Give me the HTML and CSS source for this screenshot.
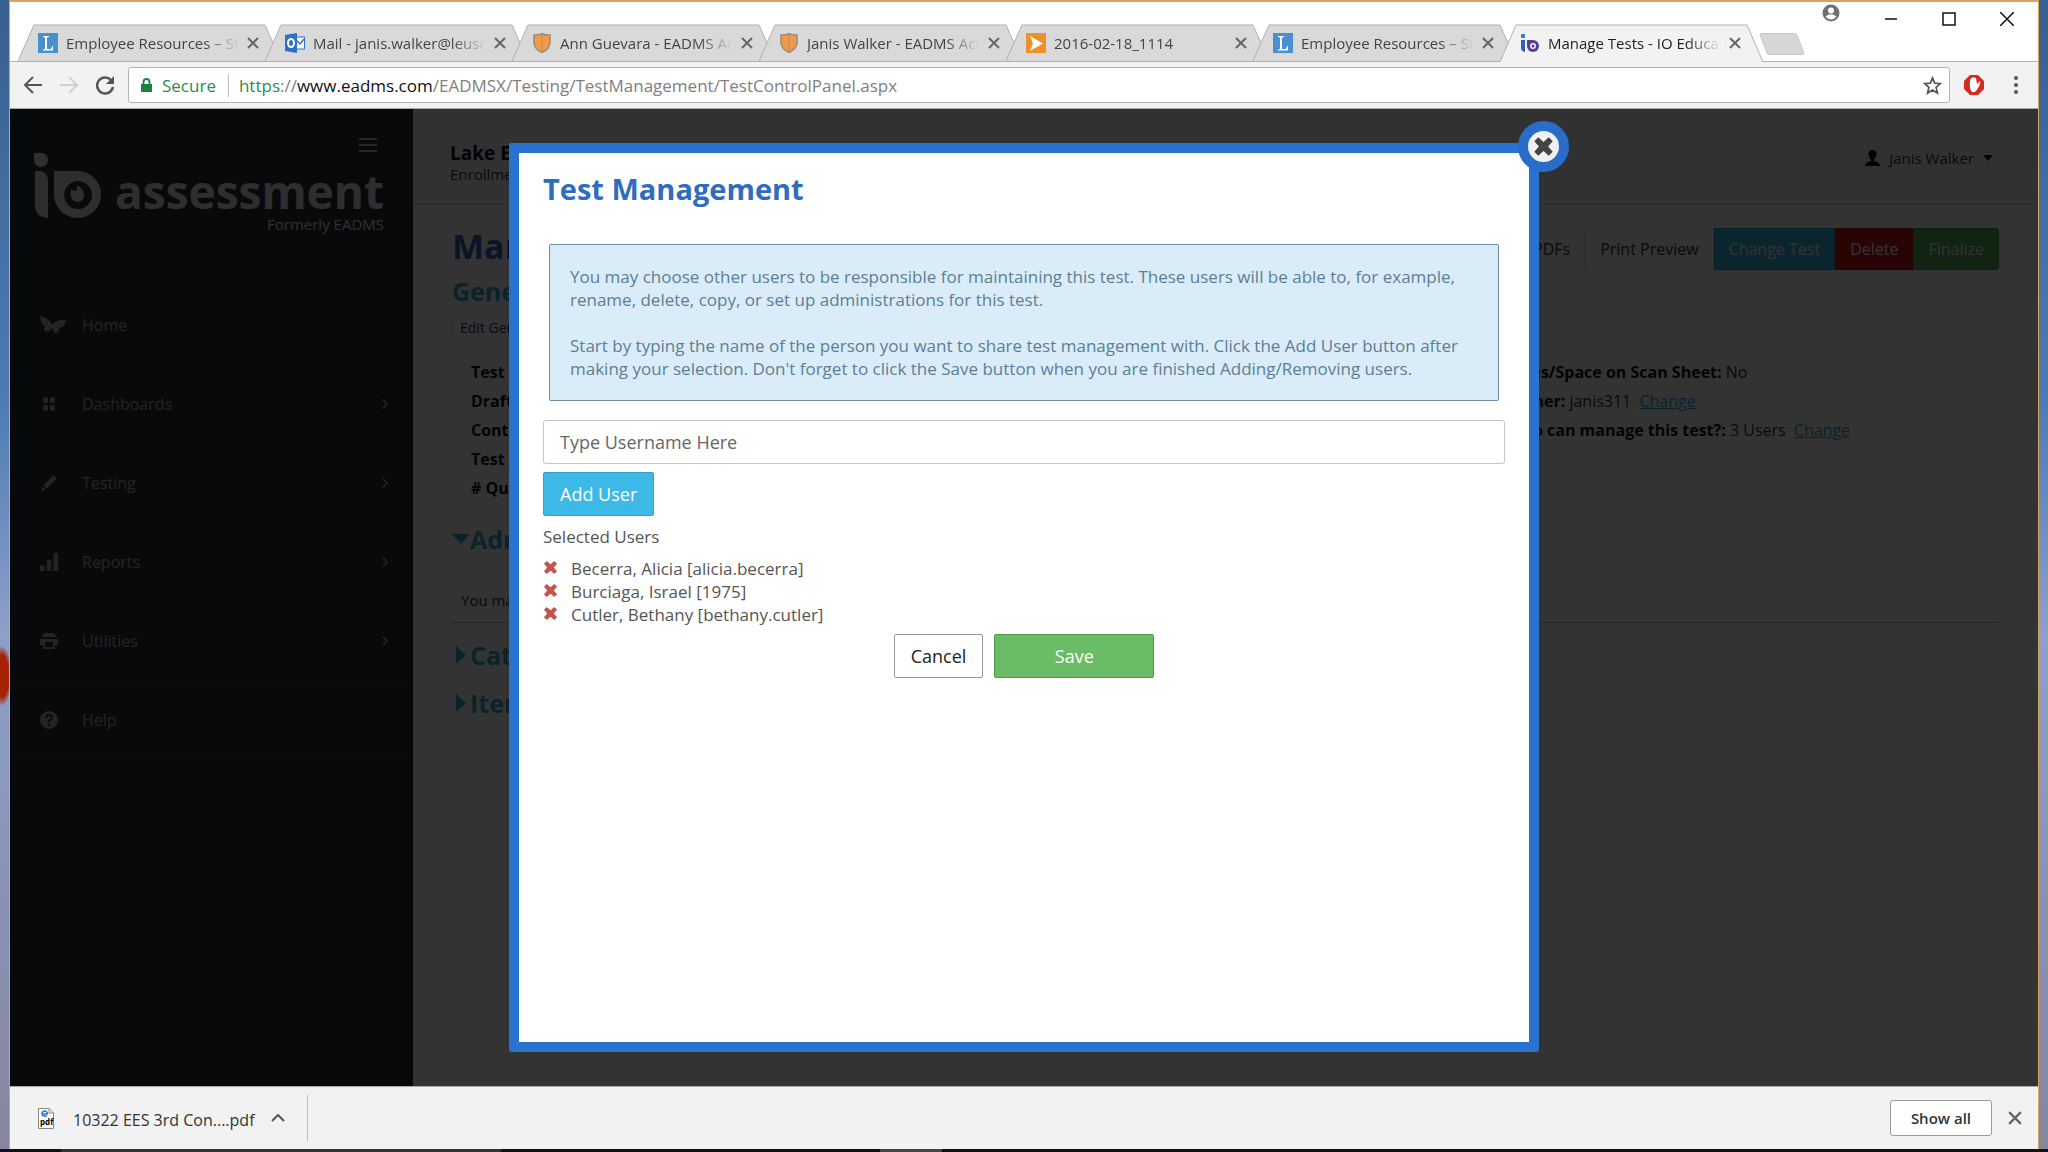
FILE: index.html
```html
<!DOCTYPE html>
<html lang="en">
<head>
    <meta charset="UTF-8">
    <meta name="viewport" content="width=device-width, initial-scale=1.0">
    <title>Manage Tests - IO Education</title>
    <link rel="stylesheet" href="styles.css">
</head>
<body>
    <svg class="defs" aria-hidden="true">
        <symbol id="tab-shape" viewBox="0 0 263 38" preserveAspectRatio="none">
            <path d="M0 38L16 1H247L263 38" vector-effect="non-scaling-stroke"/>
        </symbol>
        <symbol id="icon-close" viewBox="0 0 12 12">
            <path d="M1 1L11 11M11 1L1 11" fill="none" stroke="currentColor" stroke-width="2"/>
        </symbol>
        <symbol id="icon-l" viewBox="0 0 20 20">
            <rect width="20" height="20" fill="#4a8fd0"/>
            <path d="M5 3h6v1l-2 .6V16h4l1.200-3h.9L15 17.500H5v-1l2-.6V4.600L5 4z" fill="#fff"/>
        </symbol>
        <symbol id="icon-shield" viewBox="0 0 20 20">
            <path d="M2 2Q6 2.500 10 .8Q14 2.500 18 2V10Q17.500 16 10 19.500Q2.500 16 2 10Z" fill="#ef9a4c" stroke="#9a8a78" stroke-width="1.500"/>
            <path d="M10 2V18" stroke="#d9803a"/>
        </symbol>
        <symbol id="icon-x" viewBox="0 0 16 16">
            <path d="M1 4L4 1L8 4.500L12 1L15 4L11.500 8L15 12L12 15L8 11.500L4 15L1 12L4.500 8Z" fill="currentColor"/>
        </symbol>
        <symbol id="icon-chevron" viewBox="0 0 8 12">
            <path d="M2 1.500L6 6L2 10.500" fill="none" stroke="currentColor" stroke-width="1.500"/>
        </symbol>
    </svg>

    <div class="window">
        <div class="tab-strip">
            <div class="tabs">
                <div class="tab">
                    <svg class="tab-shape"><use href="#tab-shape"/></svg>
                    <svg class="favicon"><use href="#icon-l"/></svg>
                    <span class="tab-title">Employee Resources – Staff</span>
                    <button class="tab-close" aria-label="Close tab"><svg><use href="#icon-close"/></svg></button>
                </div>
                <div class="tab">
                    <svg class="tab-shape"><use href="#tab-shape"/></svg>
                    <svg class="favicon" viewBox="0 0 20 20">
                        <path d="M10 4h9.500v12H10z" fill="#fff" stroke="#2f6fc4"/>
                        <path d="M11 7l4 4 4-5" fill="none" stroke="#2f6fc4" stroke-width="1.500"/>
                        <path d="M0 2L12 0V20L0 18z" fill="#2f6fc4"/>
                        <ellipse cx="6" cy="10" rx="3" ry="4" fill="none" stroke="#fff" stroke-width="2"/>
                    </svg>
                    <span class="tab-title">Mail - janis.walker@leusd.org</span>
                    <button class="tab-close" aria-label="Close tab"><svg><use href="#icon-close"/></svg></button>
                </div>
                <div class="tab">
                    <svg class="tab-shape"><use href="#tab-shape"/></svg>
                    <svg class="favicon"><use href="#icon-shield"/></svg>
                    <span class="tab-title">Ann Guevara - EADMS Account</span>
                    <button class="tab-close" aria-label="Close tab"><svg><use href="#icon-close"/></svg></button>
                </div>
                <div class="tab">
                    <svg class="tab-shape"><use href="#tab-shape"/></svg>
                    <svg class="favicon"><use href="#icon-shield"/></svg>
                    <span class="tab-title">Janis Walker - EADMS Account</span>
                    <button class="tab-close" aria-label="Close tab"><svg><use href="#icon-close"/></svg></button>
                </div>
                <div class="tab">
                    <svg class="tab-shape"><use href="#tab-shape"/></svg>
                    <svg class="favicon" viewBox="0 0 20 20">
                        <rect width="20" height="20" fill="#ee9128"/>
                        <path d="M4 3L17 10.500L4 18L7 10.500Z" fill="#fff"/>
                    </svg>
                    <span class="tab-title">2016-02-18_1114</span>
                    <button class="tab-close" aria-label="Close tab"><svg><use href="#icon-close"/></svg></button>
                </div>
                <div class="tab">
                    <svg class="tab-shape"><use href="#tab-shape"/></svg>
                    <svg class="favicon"><use href="#icon-l"/></svg>
                    <span class="tab-title">Employee Resources – Staff</span>
                    <button class="tab-close" aria-label="Close tab"><svg><use href="#icon-close"/></svg></button>
                </div>
                <div class="tab active">
                    <svg class="tab-shape"><use href="#tab-shape"/></svg>
                    <svg class="favicon" viewBox="0 0 20 20">
                        <rect x="1" y="1" width="4" height="4" rx="1" fill="#3a78c8"/>
                        <path d="M1 7h4v12Q1 18 1 15z" fill="#2c5fb0"/>
                        <path d="M7 7h6a6 6 0 1 1-6 6z" fill="#5b3a98"/>
                        <circle cx="13" cy="13" r="3" fill="#f2f2f2"/>
                        <circle cx="13" cy="13" r="1.500" fill="#5b3a98"/>
                    </svg>
                    <span class="tab-title">Manage Tests - IO Education</span>
                    <button class="tab-close" aria-label="Close tab"><svg><use href="#icon-close"/></svg></button>
                </div>
                <button class="new-tab" aria-label="New tab"></button>
            </div>
            <div class="window-controls">
                <button aria-label="Account">
                    <svg width="18" height="18" viewBox="0 0 18 18">
                        <circle cx="9" cy="9" r="8.500" fill="#707070"/>
                        <circle cx="9" cy="6.500" r="3" fill="#fff"/>
                        <path d="M3.500 12.500Q9 8 14.500 12.500Q12 15.500 9 15.500T3.500 12.500" fill="#fff"/>
                    </svg>
                </button>
                <button class="control" aria-label="Minimize">
                    <svg viewBox="0 0 14 14"><path d="M1 7H13" stroke="#111" stroke-width="1.500"/></svg>
                </button>
                <button class="control" aria-label="Maximize">
                    <svg viewBox="0 0 14 14"><rect x="1" y="1" width="12" height="12" fill="none" stroke="#111" stroke-width="1.500"/></svg>
                </button>
                <button class="control" aria-label="Close">
                    <svg viewBox="0 0 14 14"><path d="M0 0L14 14M14 0L0 14" stroke="#111" stroke-width="1.500"/></svg>
                </button>
            </div>
        </div>

        <div class="toolbar">
            <button class="nav-button" aria-label="Back">
                <svg viewBox="0 0 20 20"><path d="M19 10H3M10 2L2 10L10 18" fill="none" stroke="#555" stroke-width="2"/></svg>
            </button>
            <button class="nav-button" aria-label="Forward" disabled>
                <svg viewBox="0 0 20 20"><path d="M1 10H17M10 2L18 10L10 18" fill="none" stroke="#d0d0d0" stroke-width="2"/></svg>
            </button>
            <button class="nav-button" aria-label="Reload">
                <svg viewBox="0 0 20 20">
                    <path d="M16 5A8 8 0 1 0 18 12" fill="none" stroke="#555" stroke-width="2.500"/>
                    <path d="M19 1V9H11z" fill="#555"/>
                </svg>
            </button>
            <div class="address-bar">
                <svg class="lock" viewBox="0 0 11 14">
                    <path d="M0 6H11V14H0z" fill="#1f8046"/>
                    <path d="M2.500 6V4a3 3 0 0 1 6 0V6" fill="none" stroke="#1f8046" stroke-width="1.800"/>
                </svg>
                <span class="secure">Secure</span>
                <span class="url"><span class="scheme">https</span>://<b>www.eadms.com</b>/EADMSX/Testing/TestManagement/TestControlPanel.aspx</span>
                <svg class="star" viewBox="0 0 20 20">
                    <path d="M10 2L12.300 7.500L18.300 8L13.800 12L15.200 18L10 14.800L4.800 18L6.200 12L1.700 8L7.700 7.500Z" fill="none" stroke="#555" stroke-width="1.800"/>
                </svg>
            </div>
            <svg class="extension" viewBox="0 0 20 20">
                <path d="M6 0H14L20 6V14L14 20H6L0 14V6z" fill="#d42a24"/>
                <path d="M6 5Q8 1 12 3L13 9L16 6Q17 8 14 13Q12 18 8 17Q5 14 6 5" fill="#fff"/>
            </svg>
            <svg class="menu-dots" viewBox="0 0 4 18">
                <g fill="#555"><circle cx="2" cy="2" r="2"/><circle cx="2" cy="9" r="2"/><circle cx="2" cy="16" r="2"/></g>
            </svg>
        </div>

        <div class="page">
            <nav class="sidebar">
                <button class="hamburger" aria-label="Toggle menu">
                    <svg viewBox="0 0 18 14"><path d="M0 1H18M0 7H18M0 13H18" stroke="#c4c4c4" stroke-width="2"/></svg>
                </button>
                <div class="brand">
                    <svg class="brand-mark" viewBox="0 0 67 66">
                        <path d="M0 0H9Q14 2 14 7A7 7 0 0 1 0 7zM1 18H7Q14 20 14 28V65Q1 64 1 52z" fill="#e6e6e6"/>
                        <path fill-rule="evenodd" d="M20 18H43A23.500 23.500 0 1 1 20 41zM44 28a14 14 0 1 0 .1 0z" fill="#e6e6e6"/>
                        <path d="M43 32V38L37 37Q35 48 44 49Q51 48 50 40Q48 35 43 32" fill="#e6e6e6"/>
                    </svg>
                    <div class="brand-name">
                        <div class="brand-title">assessment</div>
                        <div class="brand-note">Formerly EADMS</div>
                    </div>
                </div>
                <ul class="menu">
                    <li><a href="#">
                        <svg class="menu-icon butterfly" viewBox="0 0 26 18"><path d="M0 0Q9 2 12 9Q17 3 26 4Q25 11 19 12Q20 17 15 17Q13 15 12 12Q9 17 5 15Q3 13 5 10Q0 7 0 0z"/></svg>
                        <span>Home</span>
                    </a></li>
                    <li><a href="#">
                        <svg class="menu-icon" viewBox="0 0 16 16"><path d="M3 2h4v5H3zM9 2h4v5H9zM3 9h4v5H3zM9 9h4v5H9z"/></svg>
                        <span>Dashboards</span>
                        <svg class="menu-arrow"><use href="#icon-chevron"/></svg>
                    </a></li>
                    <li><a href="#">
                        <svg class="menu-icon" viewBox="0 0 16 16"><path d="M1 15L2 11L5 14zM3 10L12 1L15 4L6 13z"/></svg>
                        <span>Testing</span>
                        <svg class="menu-arrow"><use href="#icon-chevron"/></svg>
                    </a></li>
                    <li><a href="#">
                        <svg class="menu-icon" viewBox="0 0 16 16"><path d="M0 11h4v5H0zM6 6h4v10H6zM12 0h4v16h-4z"/></svg>
                        <span>Reports</span>
                        <svg class="menu-arrow"><use href="#icon-chevron"/></svg>
                    </a></li>
                    <li><a href="#">
                        <svg class="menu-icon" viewBox="0 0 18 16"><path fill-rule="evenodd" d="M4 0h10v2h2v2H2V2h2zM0 6h18v6h-3v4H3v-4H0zM5 9v5h8V9z"/></svg>
                        <span>Utilities</span>
                        <svg class="menu-arrow"><use href="#icon-chevron"/></svg>
                    </a></li>
                    <li><a href="#">
                        <svg class="menu-icon" viewBox="0 0 18 18">
                            <circle cx="9" cy="9" r="9"/>
                            <path d="M6 7Q6 4 9 4T12 7Q12 8.500 9 10V11.500M9 13V15" class="cutout"/>
                        </svg>
                        <span>Help</span>
                    </a></li>
                </ul>
            </nav>

            <main class="main">
                <header class="site-header">
                    <div class="school">
                        <div class="district">Lake Elsinore</div>
                        <div class="enrollment">Enrollment</div>
                    </div>
                    <button class="user-menu">
                        <svg width="15" height="16" viewBox="0 0 15 16"><path d="M7.500 0Q12 0 11.500 5Q11 8 9 9.500V11Q15 12 15 16H0Q0 12 6 11V9.500Q4 8 3.500 5Q3 0 7.500 0" fill="#111"/></svg>
                        Janis Walker
                        <svg width="10" height="6" viewBox="0 0 10 6"><path d="M0 0H10L5 6z" fill="#111"/></svg>
                    </button>
                </header>
                <div class="content">
                    <div class="title-row">
                        <h1>Manage Tests</h1>
                        <div class="actions">
                            <button>PDFs</button>
                            <button>Print Preview</button>
                            <button class="info">Change Test</button>
                            <button class="danger">Delete</button>
                            <button class="success">Finalize</button>
                        </div>
                    </div>
                    <h2>General</h2>
                    <button class="edit">Edit General</button>
                    <div class="details">
                        <ul>
                            <li><b>Test Name:</b></li>
                            <li><b>Draft:</b></li>
                            <li><b>Content:</b></li>
                            <li><b>Test Type:</b></li>
                            <li><b># Questions:</b></li>
                        </ul>
                        <ul>
                            <li><b>Lines/Space on Scan Sheet:</b> No</li>
                            <li><b>Owner:</b> janis311 <a href="#">Change</a></li>
                            <li><b>Who can manage this test?:</b> 3 Users <a href="#">Change</a></li>
                        </ul>
                    </div>
                    <h3><svg width="18" height="10" viewBox="0 0 18 10"><path d="M0 0H18L9 10z"/></svg>Administrations</h3>
                    <p class="section-note">You may</p>
                    <h3><svg width="18" height="18" viewBox="0 0 18 18"><path d="M4 0L14 9L4 18z"/></svg>Categories</h3>
                    <h3><svg width="18" height="18" viewBox="0 0 18 18"><path d="M4 0L14 9L4 18z"/></svg>Items</h3>
                </div>
            </main>

            <div class="overlay">
                <div class="modal" role="dialog" aria-labelledby="modal-title">
                    <button class="modal-close" aria-label="Close dialog"><svg><use href="#icon-x"/></svg></button>
                    <h2 class="modal-title" id="modal-title">Test Management</h2>
                    <div class="notice">
                        <p>You may choose other users to be responsible for maintaining this test. These users will be able to, for example, rename, delete, copy, or set up administrations for this test.</p>
                        <p>Start by typing the name of the person you want to share test management with. Click the Add User button after making your selection. Don't forget to click the Save button when you are finished Adding/Removing users.</p>
                    </div>
                    <input type="text" class="username" placeholder="Type Username Here" aria-label="Username">
                    <button class="button add">Add User</button>
                    <div class="selected-label">Selected Users</div>
                    <ul class="selected">
                        <li><button aria-label="Remove Alicia Becerra"><svg><use href="#icon-x"/></svg></button>Becerra, Alicia [alicia.becerra]</li>
                        <li><button aria-label="Remove Israel Burciaga"><svg><use href="#icon-x"/></svg></button>Burciaga, Israel [1975]</li>
                        <li><button aria-label="Remove Bethany Cutler"><svg><use href="#icon-x"/></svg></button>Cutler, Bethany [bethany.cutler]</li>
                    </ul>
                    <div class="modal-actions">
                        <button class="button cancel">Cancel</button>
                        <button class="button save">Save</button>
                    </div>
                </div>
            </div>
        </div>

        <div class="downloads">
            <button class="download">
                <svg width="16" height="21" viewBox="0 0 16 21">
                    <path d="M.5 .5H11L15.500 5V20.500H.5z" fill="#fff" stroke="#888"/>
                    <path d="M11 .5V5H15.500" fill="none" stroke="#888"/>
                    <path d="M4 6H9.500Q9 3 6.500 3T4 6Q4 8.500 9 8" fill="none" stroke="#2c7cd0" stroke-width="1.500"/>
                    <text x="2" y="17" class="file-type">pdf</text>
                </svg>
                <span class="file-name">10322 EES 3rd Con....pdf</span>
                <svg width="14" height="8" viewBox="0 0 14 8"><path d="M1 7L7 1L13 7" fill="none" stroke="#555" stroke-width="2"/></svg>
            </button>
            <button class="show-all">Show all</button>
            <button class="downloads-close" aria-label="Close downloads bar"><svg><use href="#icon-close"/></svg></button>
        </div>
    </div>
    <div class="taskbar"></div>
</body>
</html>
```

FILE: styles.css
```css
* {
    box-sizing: border-box;
}

body {
    margin: 0;
    height: 100vh;
    display: flex;
    flex-direction: column;
    font-family: "Open Sans", sans-serif;
    font-size: 16px;
    color: #333;
    background:
        radial-gradient(ellipse 10px 30px at 2px 676px, #a82208 70%, transparent),
        linear-gradient(#38608f, #4d7cb4 35%, #8e9fc8 55%, #85859f);
    overflow: hidden;
}

button {
    font: inherit;
    color: inherit;
    background: none;
    border: 0;
    padding: 0;
    cursor: pointer;
}

ul, p, h1, h2, h3 {
    margin: 0;
    padding: 0;
    list-style: none;
}

svg {
    display: block;
    flex: none;
}

.defs {
    position: absolute;
    width: 0;
    height: 0;
}

.window {
    flex: 1;
    min-height: 0;
    display: flex;
    flex-direction: column;
    margin: 0 9px;
    border: 1px solid #d8a35c;
    border-top-width: 2px;
    border-bottom: 0;
    background: #fff;
}

/* Browser tabs */
.tab-strip {
    display: flex;
    justify-content: space-between;
    height: 60px;
    border-bottom: 1px solid #b0b0b0;
}

.tabs {
    display: flex;
    flex: 1;
    align-items: flex-end;
    padding-left: 8px;
}

.tab {
    position: relative;
    isolation: isolate;
    display: flex;
    align-items: center;
    gap: 8px;
    flex: 0 1 263px;
    min-width: 0;
    height: 37px;
    padding: 0 22px 0 20px;
    font-size: 15px;
    color: #444;
}

.tab + .tab {
    margin-left: -16px;
}

.tab-shape {
    position: absolute;
    left: 0;
    top: 0;
    width: 100%;
    height: 100%;
    z-index: -1;
    fill: #d9d9d9;
    stroke: #b0b0b0;
}

.tab.active {
    height: 38px;
    margin-bottom: -1px;
    color: #222;
}

.active .tab-shape {
    fill: #f2f2f2;
}

.favicon {
    width: 20px;
    height: 20px;
}

.tab-title {
    flex: 1;
    min-width: 0;
    overflow: hidden;
    white-space: nowrap;
    mask-image: linear-gradient(to right, #000 80%, transparent);
}

.tab-close svg,
.downloads-close svg {
    width: 12px;
    height: 12px;
    color: #666;
}

.downloads-close svg {
    width: 14px;
    height: 14px;
}

.new-tab {
    width: 38px;
    height: 22px;
    margin: 0 0 6px;
    border: 1px solid #c8c8c8;
    border-radius: 3px;
    background: #d6d6d6;
    transform: skewX(20deg);
}

.window-controls {
    display: flex;
    align-items: flex-start;
    gap: 44px;
    padding: 2px 24px 0 0;
}

.control {
    padding-top: 8px;
}

.control svg {
    width: 14px;
    height: 14px;
}

/* Toolbar */
.toolbar {
    display: flex;
    align-items: center;
    gap: 16px;
    height: 47px;
    padding: 0 20px 0 13px;
    background: #f2f2f2;
    border-bottom: 1px solid #a8a8a8;
}

.nav-button svg {
    width: 20px;
    height: 20px;
}

.address-bar {
    flex: 1;
    display: flex;
    align-items: center;
    gap: 10px;
    height: 36px;
    margin: 0 -2px 0 -3px;
    padding: 0 7px 0 12px;
    font-size: 17px;
    background: #fff;
    border: 1px solid #b4b4b4;
    border-radius: 3px;
}

.lock {
    width: 11px;
    height: 14px;
}

.secure {
    padding-right: 12px;
    border-right: 1px solid #bbb;
    color: #2d8a4e;
}

.url {
    flex: 1;
    color: #808080;
}

.url b {
    font-weight: normal;
    color: #111;
}

.scheme {
    color: #2d8a4e;
}

.star {
    width: 19px;
    height: 19px;
}

.extension {
    width: 20px;
    height: 20px;
}

.menu-dots {
    width: 4px;
    height: 18px;
    margin-left: 14px;
}

/* Page */
.page {
    position: relative;
    flex: 1;
    min-height: 0;
    display: flex;
}

.sidebar {
    width: 403px;
    padding-top: 29px;
    background: #2c3136;
    color: #b4b4b4;
}

.hamburger {
    display: block;
    margin: 0 36px 0 auto;
}

.hamburger svg {
    width: 18px;
    height: 14px;
}

.brand {
    display: flex;
    gap: 14px;
    padding: 1px 28px 0 24px;
    color: #e6e6e6;
}

.brand-mark {
    width: 67px;
    height: 66px;
}

.brand-name {
    padding-top: 12px;
    text-align: right;
}

.brand-title {
    font-size: 46px;
    font-weight: bold;
    line-height: 52px;
}

.brand-note {
    font-size: 15px;
    line-height: 14px;
}

.menu {
    margin-top: 55px;
}

.menu li {
    border-bottom: 1px solid #363b41;
}

.menu a {
    display: flex;
    align-items: center;
    height: 78px;
    padding: 0 24px 0 30px;
    color: inherit;
    text-decoration: none;
}

.menu span {
    flex: 1;
    margin-left: 24px;
}

.menu-icon {
    width: 18px;
    height: 18px;
    fill: #b4b4b4;
}

.butterfly {
    width: 26px;
    margin-right: -8px;
}

.cutout {
    fill: none;
    stroke: #2c3136;
    stroke-width: 2;
}

.menu-arrow {
    width: 8px;
    height: 12px;
}

.main {
    flex: 1;
    background: #fff;
}

.site-header {
    display: flex;
    justify-content: space-between;
    align-items: center;
    height: 96px;
    padding: 16px 45px 14px 37px;
    background: #f6f6fa;
    border-bottom: 1px solid #ddd;
}

.school {
    padding-top: 10px;
}

.district {
    font-size: 19px;
    font-weight: bold;
    line-height: 22px;
    color: #111;
}

.enrollment {
    font-size: 15px;
    line-height: 20px;
}

.user-menu {
    display: flex;
    align-items: center;
    gap: 9px;
    font-size: 15px;
}

.content {
    padding: 23px 39px 0;
}

.title-row {
    display: flex;
    justify-content: space-between;
    height: 42px;
}

.title-row h1 {
    font-size: 34px;
    line-height: 36px;
    color: #2a6cc8;
}

.actions {
    display: flex;
}

.actions button {
    padding: 0 14px;
    border: 1px solid #e6e6e6;
}

.actions .info {
    background: #3bb8e8;
    border-color: #2c9fd0;
    color: #fff;
}

.actions .danger {
    background: #c81414;
    border-color: #b01010;
    color: #fff;
}

.actions .success {
    background: #55b055;
    border-color: #3f9a3f;
    border-radius: 0 3px 3px 0;
    color: #fff;
}

.content h2,
.content h3 {
    font-size: 25px;
    line-height: 48px;
    color: #2fa8d8;
}

.content h2 {
    margin-top: -3px;
}

.edit {
    height: 25px;
    padding: 0 7px;
    font-size: 14px;
    border: 1px solid #e0e0e0;
}

.details {
    display: flex;
    justify-content: space-between;
    margin: 18px 0 12px;
    padding-left: 19px;
    line-height: 29px;
}

.details ul:last-child {
    width: 492px;
}

.details b {
    color: #111;
}

.details a {
    margin-left: 4px;
    color: #2fa8d8;
}

.content h3 {
    display: flex;
    align-items: center;
    fill: #2fa8d8;
}

.section-note {
    padding: 27px 9px 12px;
    margin-bottom: 8px;
    line-height: 20px;
    font-size: 15px;
    border-bottom: 1px solid #bbb;
}

/* Dialog */
.overlay {
    position: absolute;
    inset: 0;
    display: flex;
    align-items: center;
    justify-content: center;
    background: rgba(0, 0, 0, 0.8);
}

.modal {
    position: relative;
    width: 1030px;
    max-width: 90%;
    height: calc(100% - 68px);
    padding: 14px 24px 0;
    background: #fff;
    border: 10px solid #2a72d0;
    border-radius: 2px;
}

.modal-close {
    position: absolute;
    top: -32px;
    right: -40px;
    width: 51px;
    height: 51px;
    border: 10px solid #2a6cc8;
    border-radius: 50%;
    background: #f0f0f0;
    color: #444;
}

.modal-close svg {
    width: 21px;
    height: 21px;
    margin: auto;
}

.modal-title {
    font-size: 29px;
    line-height: 44px;
    color: #2f6cc0;
}

.notice {
    margin: 33px 6px 19px;
    padding: 20px;
    font-size: 17px;
    line-height: 23px;
    color: #5c7f94;
    background: #daecf8;
    border: 1px solid #6a8fa3;
    border-radius: 2px;
}

.notice p + p {
    margin-top: 23px;
}

.username {
    display: block;
    width: 100%;
    height: 44px;
    padding: 0 16px;
    font: inherit;
    font-size: 18px;
    border: 1px solid #c4c4c4;
    border-radius: 3px;
}

.username::placeholder {
    color: #666;
}

.button {
    height: 44px;
    padding: 0 16px;
    font-size: 18px;
    border: 1px solid #999;
    border-radius: 2px;
}

.add {
    margin-top: 8px;
    color: #fff;
    background: #3db9e8;
    border-color: #3a9cc8;
}

.selected-label {
    margin-top: 9px;
    font-size: 17px;
    line-height: 24px;
    color: #555;
}

.selected {
    margin: 8px 0;
    font-size: 17px;
    line-height: 23px;
    color: #555;
}

.selected li {
    display: flex;
    align-items: flex-start;
    gap: 13px;
}

.selected button {
    padding-top: 3px;
}

.selected svg {
    width: 15px;
    height: 15px;
    color: #c4554a;
}

.modal-actions {
    display: flex;
    justify-content: center;
    gap: 11px;
}

.cancel {
    color: #222;
}

.save {
    width: 160px;
    color: #fff;
    background: #6abd66;
    border-color: #4c9a48;
}

/* Downloads bar */
.downloads {
    display: flex;
    align-items: center;
    gap: 16px;
    height: 63px;
    padding-right: 16px;
    background: #f2f2f2;
    border-top: 1px solid #aaa;
}

.download {
    display: flex;
    align-items: center;
    gap: 16px;
    height: 46px;
    padding: 0 22px 0 28px;
    margin-right: auto;
    border-right: 1px solid #c0c0c0;
}

.file-name {
    padding: 4px 0 0 3px;
}

.file-type {
    font-size: 8px;
    font-weight: bold;
}

.show-all {
    height: 36px;
    padding: 0 20px;
    font-size: 15px;
    font-weight: 600;
    background: #fff;
    border: 1px solid #999;
    border-radius: 3px;
}

.taskbar {
    height: 3px;
    background: linear-gradient(to right, #111 61px, #333 61px 501px, #111 501px 880px, #444 880px 942px, #111 942px);
}
```
